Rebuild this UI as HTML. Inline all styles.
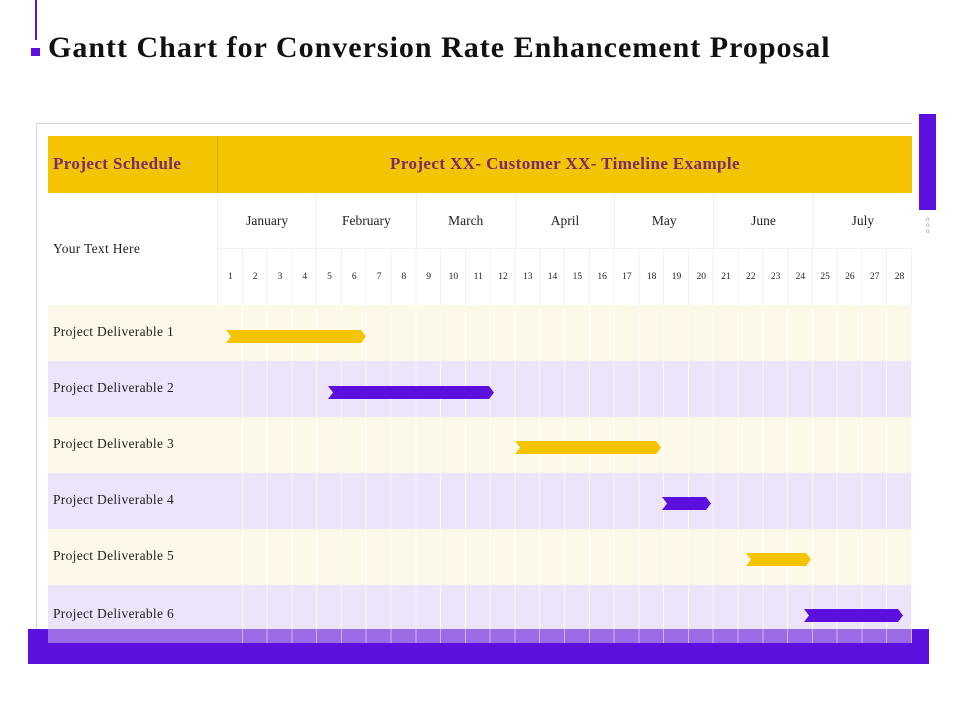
<!DOCTYPE html>
<html><head><meta charset="utf-8"><style>
*{margin:0;padding:0;box-sizing:border-box}
body{width:960px;height:720px;background:#fff;position:relative;overflow:hidden;font-family:"Liberation Serif",serif;color:#222}
.a{position:absolute}
.title{left:48px;top:31px;font-size:30px;font-weight:bold;color:#111;white-space:nowrap;letter-spacing:1px}
.row{left:48px;width:864px;height:56px}
.lab{position:absolute;left:5px;font-size:13.5px;color:#222;letter-spacing:0.3px}
.grid{position:absolute;left:170px;top:0;width:694px;height:100%;background:repeating-linear-gradient(to right,transparent 0,transparent 23.8px,rgba(255,255,255,.85) 23.8px,rgba(255,255,255,.85) 24.786px)}
.days{left:218px;top:249px;width:694px;height:56px;display:flex;background:repeating-linear-gradient(to right,transparent 0,transparent 23.8px,#f1f1f1 23.8px,#f1f1f1 24.786px)}
.days span{flex:1;text-align:center;font-size:9.5px;line-height:56px}
.months{left:218px;top:193px;width:694px;height:56px;display:flex;border-bottom:1px solid #f1f1f1}
.months span{flex:1;text-align:center;font-size:13.5px;line-height:56px;border-right:1px solid #f1f1f1}
.hd{font-size:17px;font-weight:bold;color:#7a2a70;letter-spacing:0.4px;white-space:nowrap}
</style></head><body>
<div class="a" style="left:35px;top:0;width:2px;height:40px;background:#5b10de"></div>
<div class="a" style="left:31px;top:48px;width:9px;height:8px;background:#5b10de"></div>
<div class="a title">Gantt Chart for Conversion Rate Enhancement Proposal</div>

<div class="a" style="left:36px;top:123px;width:876px;height:506px;border-left:1px solid #d6d6d6;border-top:1px solid #d6d6d6"></div>
<div class="a" style="left:919px;top:114px;width:17px;height:96px;background:#5b10de"></div>
<div class="a" style="left:926px;top:216px;font-size:7px;line-height:6px;color:#888">o<br>o<br>o</div>

<div class="a" style="left:28px;top:629px;width:901px;height:35px;background:#5b10de"></div>

<div class="a" style="left:48px;top:136px;width:864px;height:57px;background:#f5c400"></div>
<div class="a" style="left:217px;top:136px;width:1px;height:57px;background:#d9ae10"></div>
<div class="a hd" style="left:53px;top:154px">Project Schedule</div>
<div class="a hd" style="left:218px;top:154px;width:694px;text-align:center">Project XX- Customer XX- Timeline Example</div>

<div class="a" style="left:217px;top:193px;width:1px;height:112px;background:#f1f1f1"></div>
<div class="a" style="left:53px;top:241px;font-size:13.5px;letter-spacing:0.3px">Your Text Here</div>
<div class="a months"><span>January</span><span>February</span><span>March</span><span>April</span><span>May</span><span>June</span><span style="border:none">July</span></div>
<div class="a days"><span>1</span><span>2</span><span>3</span><span>4</span><span>5</span><span>6</span><span>7</span><span>8</span><span>9</span><span>10</span><span>11</span><span>12</span><span>13</span><span>14</span><span>15</span><span>16</span><span>17</span><span>18</span><span>19</span><span>20</span><span>21</span><span>22</span><span>23</span><span>24</span><span>25</span><span>26</span><span>27</span><span>28</span></div>

<div class="a row" style="top:305px;background:#fdf8e8"><div class="grid"></div><div class="lab" style="top:19px">Project Deliverable 1</div></div>
<div class="a row" style="top:361px;background:#ede3fb"><div class="grid"></div><div class="lab" style="top:19px">Project Deliverable 2</div></div>
<div class="a row" style="top:417px;background:#fdf8e8"><div class="grid"></div><div class="lab" style="top:19px">Project Deliverable 3</div></div>
<div class="a row" style="top:473px;background:#ede3fb"><div class="grid"></div><div class="lab" style="top:19px">Project Deliverable 4</div></div>
<div class="a row" style="top:529px;background:#fdf8e8"><div class="grid"></div><div class="lab" style="top:19px">Project Deliverable 5</div></div>
<div class="a row" style="top:585px;height:44px;background:#ede3fb"><div class="grid"></div><div class="lab" style="top:21px">Project Deliverable 6</div></div>
<div class="a row" style="top:629px;height:14px;background:#9b6be6"><div class="grid" style="background:repeating-linear-gradient(to right,transparent 0,transparent 23.8px,rgba(255,255,255,.5) 23.8px,rgba(255,255,255,.5) 24.786px)"></div></div>

<svg class="a" style="left:0;top:0" width="960" height="720">
<polygon points="226,330 361,330 366,336.5 361,343 226,343 231,336.5" fill="#f5c400"/>
<polygon points="328,386 489,386 494,392.5 489,399 328,399 333,392.5" fill="#5b10de"/>
<polygon points="515,441 656,441 661,447.5 656,454 515,454 520,447.5" fill="#f5c400"/>
<polygon points="662,497 706,497 711,503.5 706,510 662,510 667,503.5" fill="#5b10de"/>
<polygon points="746,553 806,553 811,559.5 806,566 746,566 751,559.5" fill="#f5c400"/>
<polygon points="804,609 898,609 903,615.5 898,622 804,622 809,615.5" fill="#5b10de"/>
</svg>
</body></html>
